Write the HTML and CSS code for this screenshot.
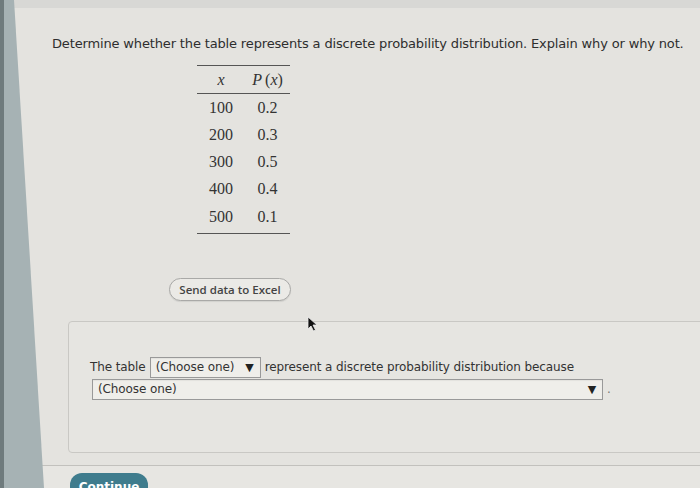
FILE: index.html
```html
<!DOCTYPE html>
<html>
<head>
<meta charset="utf-8">
<link rel="stylesheet" href="styles.css">
</head>
<body>
<div class="screen">
  <div class="topband"></div>
  <main class="page">
    <p class="question">Determine whether the table represents a discrete probability distribution. Explain why or why not.</p>
    <table class="dist">
      <thead>
        <tr><th><i>x</i></th><th><i>P</i>&#8201;(<i>x</i>)</th></tr>
      </thead>
      <tbody>
        <tr><td>100</td><td>0.2</td></tr>
        <tr><td>200</td><td>0.3</td></tr>
        <tr><td>300</td><td>0.5</td></tr>
        <tr><td>400</td><td>0.4</td></tr>
        <tr><td>500</td><td>0.1</td></tr>
      </tbody>
    </table>
    <div class="excel-row"><button class="excel">Send data to Excel</button></div>
    <section class="answer">
      <div class="line1">
        <span>The table</span>
        <span class="select small"><span class="label">(Choose one)</span><span class="arrow">▼</span></span>
        <span>represent a discrete probability distribution because</span>
      </div>
      <div class="line2">
        <span class="select wide"><span class="label">(Choose one)</span><span class="arrow">▼</span></span>
        <span class="dot">.</span>
      </div>
    </section>
    <div class="footer">
      <button class="continue">Continue</button>
    </div>
  </main>
  <svg class="cursor" width="12" height="16" viewBox="0 0 12 16"><path d="M1 1 L1 13 L4 10 L6.5 15 L8.5 14 L6 9 L10 9 Z" fill="#111" stroke="#eee" stroke-width="0.8"/></svg>
</div>
</body>
</html>
```
FILE: styles.css
```css
html, body {
  margin: 0;
  padding: 0;
}
body {
  width: 700px;
  height: 488px;
  overflow: hidden;
  background: #e4e3df;
  font-family: "DejaVu Sans", Verdana, sans-serif;
  color: #333;
}
.screen {
  position: relative;
  width: 700px;
  height: 488px;
  overflow: hidden;
}
.screen::before {
  content: "";
  position: absolute;
  left: 0;
  top: 0;
  width: 46px;
  height: 488px;
  background: #a6b2b4;
  clip-path: polygon(0 0, 14px 0, 44px 488px, 0 488px);
  z-index: 2;
}
.screen::after {
  content: "";
  position: absolute;
  left: 0;
  top: 0;
  width: 4px;
  height: 488px;
  background: #6f7b7d;
  z-index: 3;
}
.topband {
  height: 8px;
  background: #d8d8d5;
}
.page {
  padding-left: 52px;
  padding-top: 28px;
}
.question {
  margin: 0;
  font-size: 13px;
  line-height: 16px;
  color: #2e2e2e;
  letter-spacing: -0.15px;
  white-space: nowrap;
}
.dist {
  margin-top: 13px;
  margin-left: 145px;
  border-collapse: collapse;
  font-family: "Liberation Serif", "Times New Roman", serif;
  font-size: 16px;
  color: #333;
  border-top: 1px solid #555;
  border-bottom: 1px solid #555;
}
.dist th {
  font-weight: normal;
  height: 27px;
  border-bottom: 1px solid #555;
  padding: 0;
}
.dist th:first-child, .dist td:first-child {
  width: 48px;
  text-align: center;
}
.dist th:last-child, .dist td:last-child {
  width: 45px;
  text-align: center;
}
.dist td {
  height: 27px;
  padding: 0;
}
.dist tbody tr:last-child td {
  height: 29px;
  padding-bottom: 2px;
}
.excel-row {
  margin-top: 44px;
  padding-left: 117px;
}
.excel {
  width: 122px;
  height: 23px;
  border: 1px solid #a9a9a7;
  border-radius: 12px;
  background: #ebeae6;
  font-family: "Open Sans", "DejaVu Sans", sans-serif;
  font-size: 11.5px;
  font-weight: 600;
  color: #444;
  padding: 0;
  white-space: nowrap;
  box-shadow: 0 1px 1px rgba(0,0,0,0.08);
}
.answer {
  margin-top: 20px;
  margin-left: 16px;
  width: 660px;
  height: 132px;
  border: 1px solid #c9c8c4;
  border-radius: 4px;
  background: #e6e5e1;
  box-sizing: border-box;
  padding: 34px 0 0 21px;
  font-size: 12px;
  letter-spacing: -0.1px;
  color: #333;
}
.line1 {
  display: flex;
  align-items: center;
  gap: 4px;
  height: 22px;
}
.line2 {
  display: flex;
  align-items: center;
  gap: 4px;
  height: 22px;
  padding-left: 2px;
}
.select {
  display: inline-flex;
  align-items: center;
  justify-content: space-between;
  box-sizing: border-box;
  height: 21px;
  border: 1px solid #999;
  background: #efeeea;
  padding: 0 6px 0 5px;
  font-size: 12px;
  color: #333;
  box-shadow: inset 0 1px 1px rgba(0,0,0,0.05);
}
.select.small {
  width: 111px;
}
.select.wide {
  width: 511px;
}
.arrow {
  font-size: 11px;
  color: #222;
}
.dot {
  color: #777;
}
.footer {
  margin-top: 12px;
  margin-left: -10px;
  border-top: 1px solid #c2c1bd;
  padding-top: 7px;
  padding-left: 28px;
  height: 30px;
  background: #e7e6e2;
}
.continue {
  width: 78px;
  height: 28px;
  border: none;
  border-radius: 12px;
  background: #3f7c8d;
  color: #fff;
  font-family: "DejaVu Sans", Verdana, sans-serif;
  font-weight: bold;
  font-size: 12px;
  padding: 0;
  padding-top: 7px;
  display: flex;
  justify-content: center;
  align-items: flex-start;
}
.cursor {
  position: absolute;
  left: 307px;
  top: 316px;
  z-index: 5;
}
```
